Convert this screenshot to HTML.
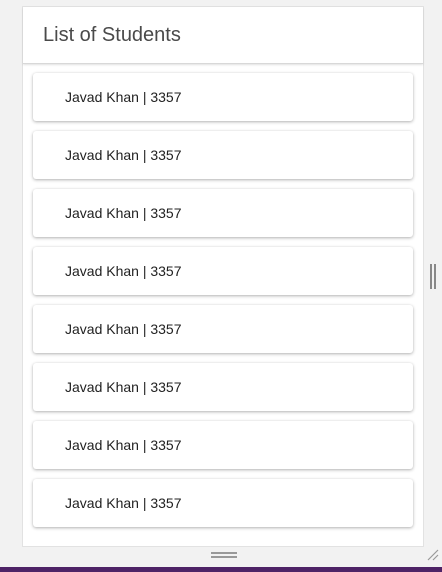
<!DOCTYPE html>
<html><head><style>
body{margin:0;width:442px;height:572px;background:#f2f2f2;position:relative;overflow:hidden;font-family:"Liberation Sans",Arial,sans-serif;}
.card{position:absolute;left:22px;top:6px;width:400px;height:539px;background:#fff;border:1px solid #e2e2e2;}
.hdr{height:56px;border-bottom:1px solid #d8d8d8;box-shadow:0 1px 2px rgba(0,0,0,.12);}
.hdr span{position:absolute;left:20px;top:17px;font-size:20px;color:#4a4a4a;}
.item{position:absolute;left:10px;width:380px;height:48px;background:#fff;border-radius:3px;box-shadow:0 1px 3px rgba(0,0,0,.3),0 0 1px rgba(0,0,0,.08);}
.item span{position:absolute;left:32px;top:16px;font-size:14px;color:#222;}
.grip{position:absolute;left:211px;width:26px;height:2px;background:#999;}
.vg{position:absolute;top:264px;width:2px;height:25px;background:#888;}
.bar{position:absolute;left:0;top:567px;width:442px;height:5px;background:#4e2366;}
</style></head><body>
<div class="card"><div class="hdr"><span>List of Students</span></div>
<div class="item" style="top:66px"><span>Javad Khan | 3357</span></div>
<div class="item" style="top:124px"><span>Javad Khan | 3357</span></div>
<div class="item" style="top:182px"><span>Javad Khan | 3357</span></div>
<div class="item" style="top:240px"><span>Javad Khan | 3357</span></div>
<div class="item" style="top:298px"><span>Javad Khan | 3357</span></div>
<div class="item" style="top:356px"><span>Javad Khan | 3357</span></div>
<div class="item" style="top:414px"><span>Javad Khan | 3357</span></div>
<div class="item" style="top:472px"><span>Javad Khan | 3357</span></div>
</div>
<div class="grip" style="top:552px"></div><div class="grip" style="top:556px"></div>
<div class="vg" style="left:430px"></div><div class="vg" style="left:434px"></div>
<svg style="position:absolute;left:426px;top:548px" width="14" height="14"><path d="M2 12L12 2M7 12L12 7" stroke="#999" stroke-width="1.2"/></svg>
<div class="bar"></div>
</body></html>
